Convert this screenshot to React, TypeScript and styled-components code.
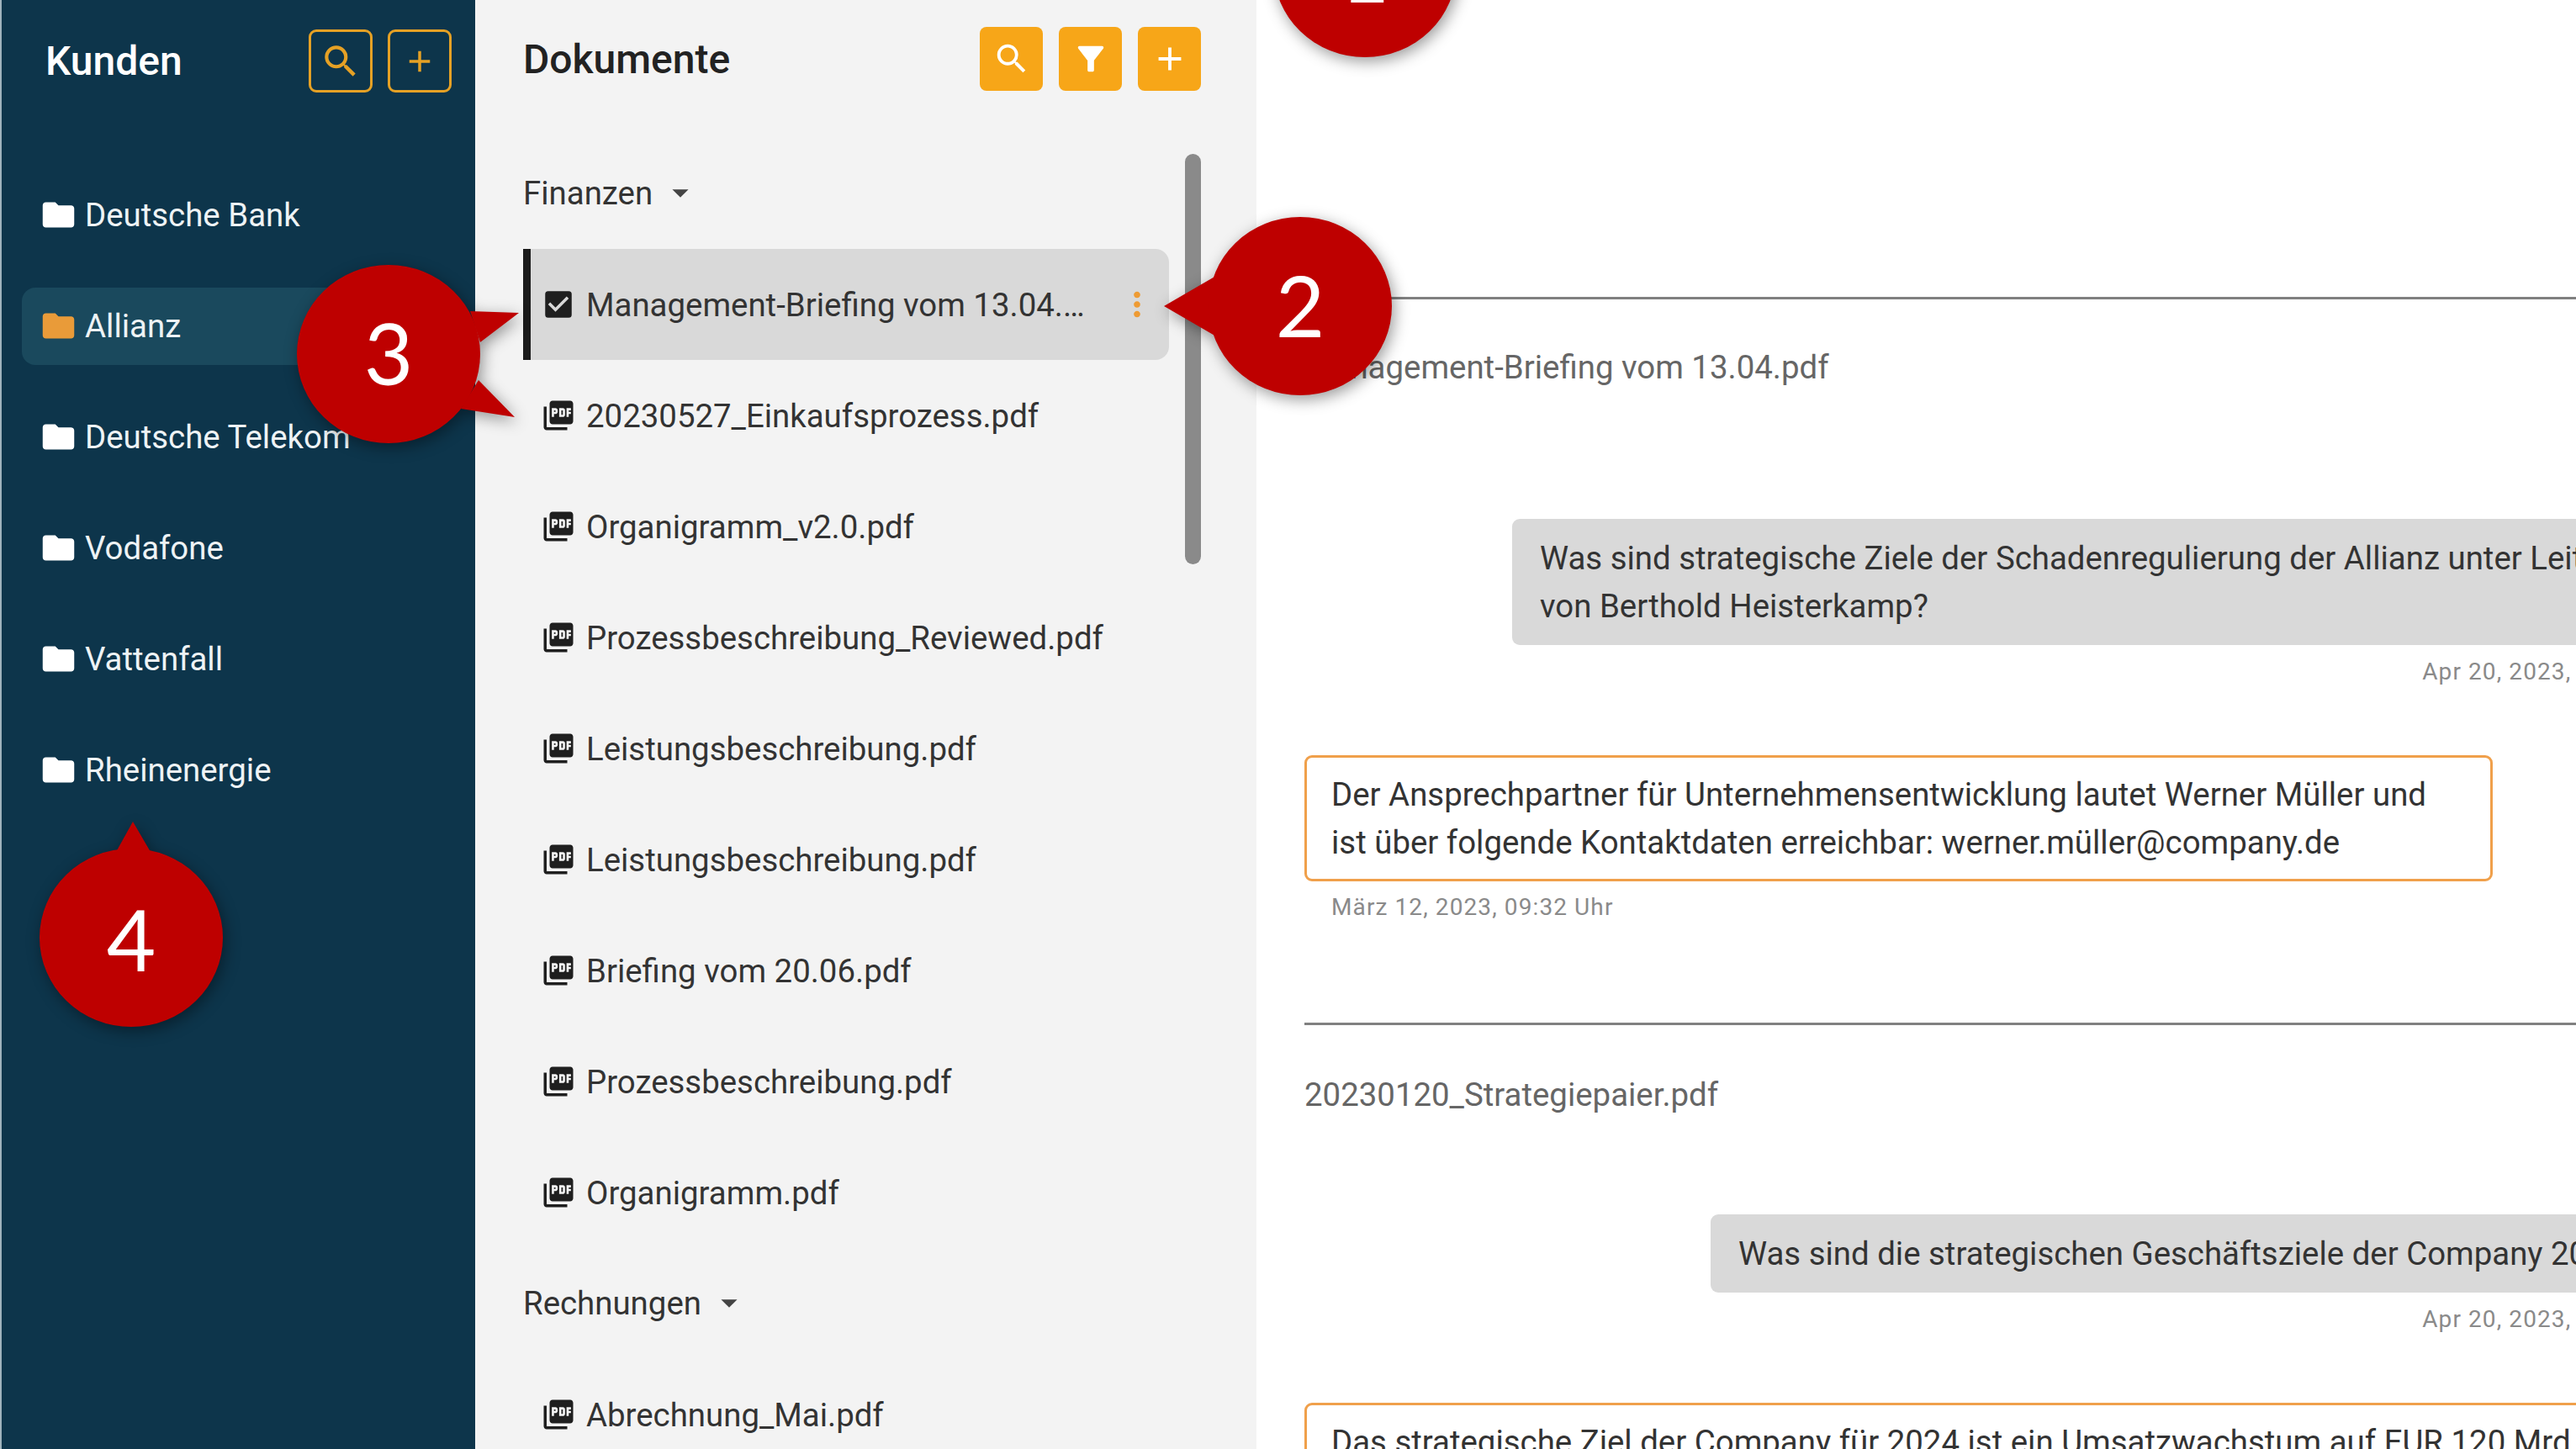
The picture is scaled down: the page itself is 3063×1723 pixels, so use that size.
import React from 'react';
import styled, {createGlobalStyle} from "styled-components";
import {
    MdAdd,
    MdArrowDropDown,
    MdCheckBox,
    MdFilterAlt,
    MdFolder,
    MdMoreVert,
    MdPictureAsPdf,
    MdSearch
} from "react-icons/md";

const GlobalStyle = createGlobalStyle`
  html, body {
    margin: 0;
    padding: 0;
    overflow: hidden;
    background: #fff;
    font-family: Roboto, "Liberation Sans", sans-serif;
  }
`

const Page = styled.div`
  position: relative;
  display: flex;
  width: 3063px;
  height: 1723px;
  overflow: hidden;
`

const Sidebar = styled.aside`
  flex: 0 0 565px;
  box-sizing: border-box;
  background: #0d354b;
  border-left: 2px solid #9fb3bd;
  padding: 35px 28px 0 24px;
`

const SidebarHeader = styled.div`
  display: flex;
  align-items: center;
  justify-content: space-between;
  padding-left: 28px;
  height: 75px;
`

const SidebarTitle = styled.h1`
  margin: 0;
  font-size: 48px;
  font-weight: 500;
  color: #fff;
`

const Actions = styled.div<{ $gap: number }>`
  display: flex;
  gap: ${props => props.$gap}px;
`

const OutlineButton = styled.div`
  box-sizing: border-box;
  width: 76px;
  height: 75px;
  display: flex;
  align-items: center;
  justify-content: center;
  border: 3px solid #e5a125;
  border-radius: 9px;
  color: #e5a125;
  font-size: 42px;

  svg.search {
    font-size: 50px;
  }
`

const ClientList = styled.div`
  display: flex;
  flex-direction: column;
  gap: 40px;
  margin-top: 100px;
`

const ClientRow = styled.div<{ $active?: boolean }>`
  box-sizing: border-box;
  height: 92px;
  display: flex;
  align-items: center;
  gap: 9px;
  padding: 0 0 2px 21px;
  border-radius: 16px;
  background: ${props => props.$active ? '#1a495d' : 'transparent'};
  color: #eef3f5;
  font-size: 38.4px;

  svg {
    font-size: 45px;
    color: ${props => props.$active ? '#e99b39' : '#fff'};
  }
`

const DocPanel = styled.section`
  flex: 0 0 929px;
  box-sizing: border-box;
  background: #f3f3f3;
  padding: 32px 66px 0 57px;
`

const DocHeader = styled.div`
  display: flex;
  align-items: center;
  justify-content: space-between;
  height: 76px;
`

const DocTitle = styled.h2`
  margin: 0;
  font-size: 48px;
  font-weight: 500;
  color: #222;
`

const FilledButton = styled.div`
  width: 75px;
  height: 76px;
  display: flex;
  align-items: center;
  justify-content: center;
  border-radius: 8px;
  background: #f7a618;
  color: #fff;
  font-size: 46px;
`

const DocBody = styled.div`
  display: flex;
  gap: 19px;
  margin-top: 56px;
`

const DocList = styled.div`
  width: 768px;
`

const GroupLabel = styled.div`
  box-sizing: border-box;
  height: 132px;
  padding-bottom: 2px;
  display: flex;
  align-items: center;
  color: #333;
  font-size: 38.4px;

  svg {
    font-size: 46px;
    margin-left: 10px;
    color: #444;
  }
`

const DocRow = styled.div<{ $selected?: boolean }>`
  box-sizing: border-box;
  height: 132px;
  display: flex;
  align-items: center;
  padding-left: ${props => props.$selected ? '12px' : '21px'};
  padding-right: 15px;
  border-left: ${props => props.$selected ? '9px solid #1a1a1a' : 'none'};
  border-radius: ${props => props.$selected ? '0 16px 16px 0' : '0'};
  background: ${props => props.$selected ? '#d9d9d9' : 'transparent'};
  color: #333;
  font-size: 38.4px;
`

const DocIcon = styled.span`
  flex: 0 0 42px;
  display: flex;
  font-size: 42px;
  margin-right: 12px;
  color: #1f1f1f;
`

const DocName = styled.span`
  flex: 1;
  min-width: 0;
  white-space: nowrap;
  overflow: hidden;
  text-overflow: ellipsis;
`

const RowMenu = styled.span`
  margin-left: 28px;
  display: flex;
  font-size: 46px;
  color: #ee9b33;
`

const Scrollbar = styled.div`
  width: 19px;
  height: 488px;
  margin-top: 19px;
  border-radius: 10px;
  background: #8a8a8a;
`

const Main = styled.main`
  flex: 1;
  min-width: 0;
  background: #fff;
  padding: 353px 0 0 57px;
  overflow: hidden;
`

const Thread = styled.div`
  width: 1680px;
  margin-bottom: 119px;
`

const Divider = styled.div`
  height: 3px;
  background: #808080;
`

const FileName = styled.div<{ $top: number, $after: number }>`
  margin-top: ${props => props.$top}px;
  margin-bottom: ${props => props.$after}px;
  line-height: 48px;
  font-size: 38.4px;
  color: #666;
`

const Question = styled.div<{ $indent: number }>`
  box-sizing: border-box;
  margin-left: ${props => props.$indent}px;
  padding: 18px 34px 18px 33px;
  border-radius: 9px 0 0 9px;
  background: #d9d9d9;
  color: #333;
  font-size: 38.4px;
  line-height: 57px;
`

const QuestionTime = styled.div`
  margin: 14px 0 81px;
  padding-right: 36px;
  text-align: right;
  line-height: 36px;
  font-size: 28px;
  letter-spacing: 1.1px;
  color: #8a8a8a;
`

const Answer = styled.div<{ $width: number }>`
  box-sizing: border-box;
  width: ${props => props.$width}px;
  padding: 15px 29px;
  border: 3px solid #f0a04b;
  border-radius: 9px;
  color: #333;
  font-size: 38.4px;
  line-height: 57px;
`

const AnswerTime = styled.div`
  margin: 13px 0 0 32px;
  line-height: 36px;
  font-size: 28px;
  letter-spacing: 1.1px;
  color: #8a8a8a;
`

const Marker = styled.div<{ $x: number, $y: number }>`
  position: absolute;
  left: ${props => props.$x}px;
  top: ${props => props.$y}px;
  width: 0;
  height: 0;
`

const MarkerShape = styled.svg`
  position: absolute;
  left: -200px;
  top: -200px;
  width: 400px;
  height: 400px;
  filter: drop-shadow(3px 5px 9px rgba(0, 0, 0, 0.4));
`

const MarkerNumber = styled.span<{ $shift: number }>`
  position: absolute;
  left: -50px;
  top: ${props => props.$shift - 61}px;
  width: 100px;
  line-height: 120px;
  text-align: center;
  font-family: Lato, sans-serif;
  font-size: 101px;
  color: #fff;
`

const clients = ['Deutsche Bank', 'Allianz', 'Deutsche Telekom', 'Vodafone', 'Vattenfall', 'Rheinenergie'];

const financeDocs = [
    '20230527_Einkaufsprozess.pdf',
    'Organigramm_v2.0.pdf',
    'Prozessbeschreibung_Reviewed.pdf',
    'Leistungsbeschreibung.pdf',
    'Leistungsbeschreibung.pdf',
    'Briefing vom 20.06.pdf',
    'Prozessbeschreibung.pdf',
    'Organigramm.pdf'
];

const markers = [
    {n: 1, x: 1623, y: -38, shift: 3, tips: []},
    {n: 2, x: 1546, y: 364, shift: -1, tips: ['-162,0 -100,-36 -100,36']},
    {n: 3, x: 462, y: 421, shift: -1, tips: ['155,-49 97,-51 109,-14', '150,75 107,31 86,65']},
    {n: 4, x: 156, y: 1115, shift: 2, tips: ['2,-138 -18,-102 23,-102']}
];

const DocEntry: React.FC<{ name: string }> = ({name}) => (
    <DocRow>
        <DocIcon><MdPictureAsPdf/></DocIcon>
        <DocName>{name}</DocName>
    </DocRow>
);

const App: React.FC = () => {
    return (
        <Page>
            <GlobalStyle/>
            <Sidebar>
                <SidebarHeader>
                    <SidebarTitle>Kunden</SidebarTitle>
                    <Actions $gap={18}>
                        <OutlineButton><MdSearch className="search"/></OutlineButton>
                        <OutlineButton><MdAdd/></OutlineButton>
                    </Actions>
                </SidebarHeader>
                <ClientList>
                    {clients.map(client => (
                        <ClientRow key={client} $active={client === 'Allianz'}>
                            <MdFolder/>
                            {client}
                        </ClientRow>
                    ))}
                </ClientList>
            </Sidebar>
            <DocPanel>
                <DocHeader>
                    <DocTitle>Dokumente</DocTitle>
                    <Actions $gap={19}>
                        <FilledButton><MdSearch/></FilledButton>
                        <FilledButton><MdFilterAlt/></FilledButton>
                        <FilledButton><MdAdd/></FilledButton>
                    </Actions>
                </DocHeader>
                <DocBody>
                    <DocList>
                        <GroupLabel>Finanzen<MdArrowDropDown/></GroupLabel>
                        <DocRow $selected>
                            <DocIcon><MdCheckBox/></DocIcon>
                            <DocName>Management-Briefing vom 13.04.pdf</DocName>
                            <RowMenu><MdMoreVert/></RowMenu>
                        </DocRow>
                        {financeDocs.map((name, i) => <DocEntry key={i} name={name}/>)}
                        <GroupLabel>Rechnungen<MdArrowDropDown/></GroupLabel>
                        <DocEntry name="Abrechnung_Mai.pdf"/>
                    </DocList>
                    <Scrollbar/>
                </DocBody>
            </DocPanel>
            <Main>
                <Thread>
                    <Divider/>
                    <FileName $top={57} $after={156}>Management-Briefing vom 13.04.pdf</FileName>
                    <Question $indent={247}>
                        Was sind strategische Ziele der Schadenregulierung der Allianz unter Leitung von Berthold Heisterkamp?
                    </Question>
                    <QuestionTime>Apr 20, 2023, 09:32 Uhr</QuestionTime>
                    <Answer $width={1413}>
                        Der Ansprechpartner für Unternehmensentwicklung lautet Werner Müller und ist über folgende Kontaktdaten erreichbar: werner.müller@company.de
                    </Answer>
                    <AnswerTime>März 12, 2023, 09:32 Uhr</AnswerTime>
                </Thread>
                <Thread>
                    <Divider/>
                    <FileName $top={59} $after={118}>20230120_Strategiepaier.pdf</FileName>
                    <Question $indent={483}>
                        Was sind die strategischen Geschäftsziele der Company 2024?
                    </Question>
                    <QuestionTime>Apr 20, 2023, 09:32 Uhr</QuestionTime>
                    <Answer $width={1680}>
                        Das strategische Ziel der Company für 2024 ist ein Umsatzwachstum auf EUR 120 Mrd.
                    </Answer>
                </Thread>
            </Main>
            {markers.map(marker => (
                <Marker key={marker.n} $x={marker.x} $y={marker.y}>
                    <MarkerShape viewBox="-200 -200 400 400">
                        {marker.tips.map(points => <polygon key={points} points={points} fill="#be0000"/>)}
                        <ellipse rx="109" ry="106" fill="#be0000"/>
                    </MarkerShape>
                    <MarkerNumber $shift={marker.shift}>{marker.n}</MarkerNumber>
                </Marker>
            ))}
        </Page>
    );
}

export default App;
